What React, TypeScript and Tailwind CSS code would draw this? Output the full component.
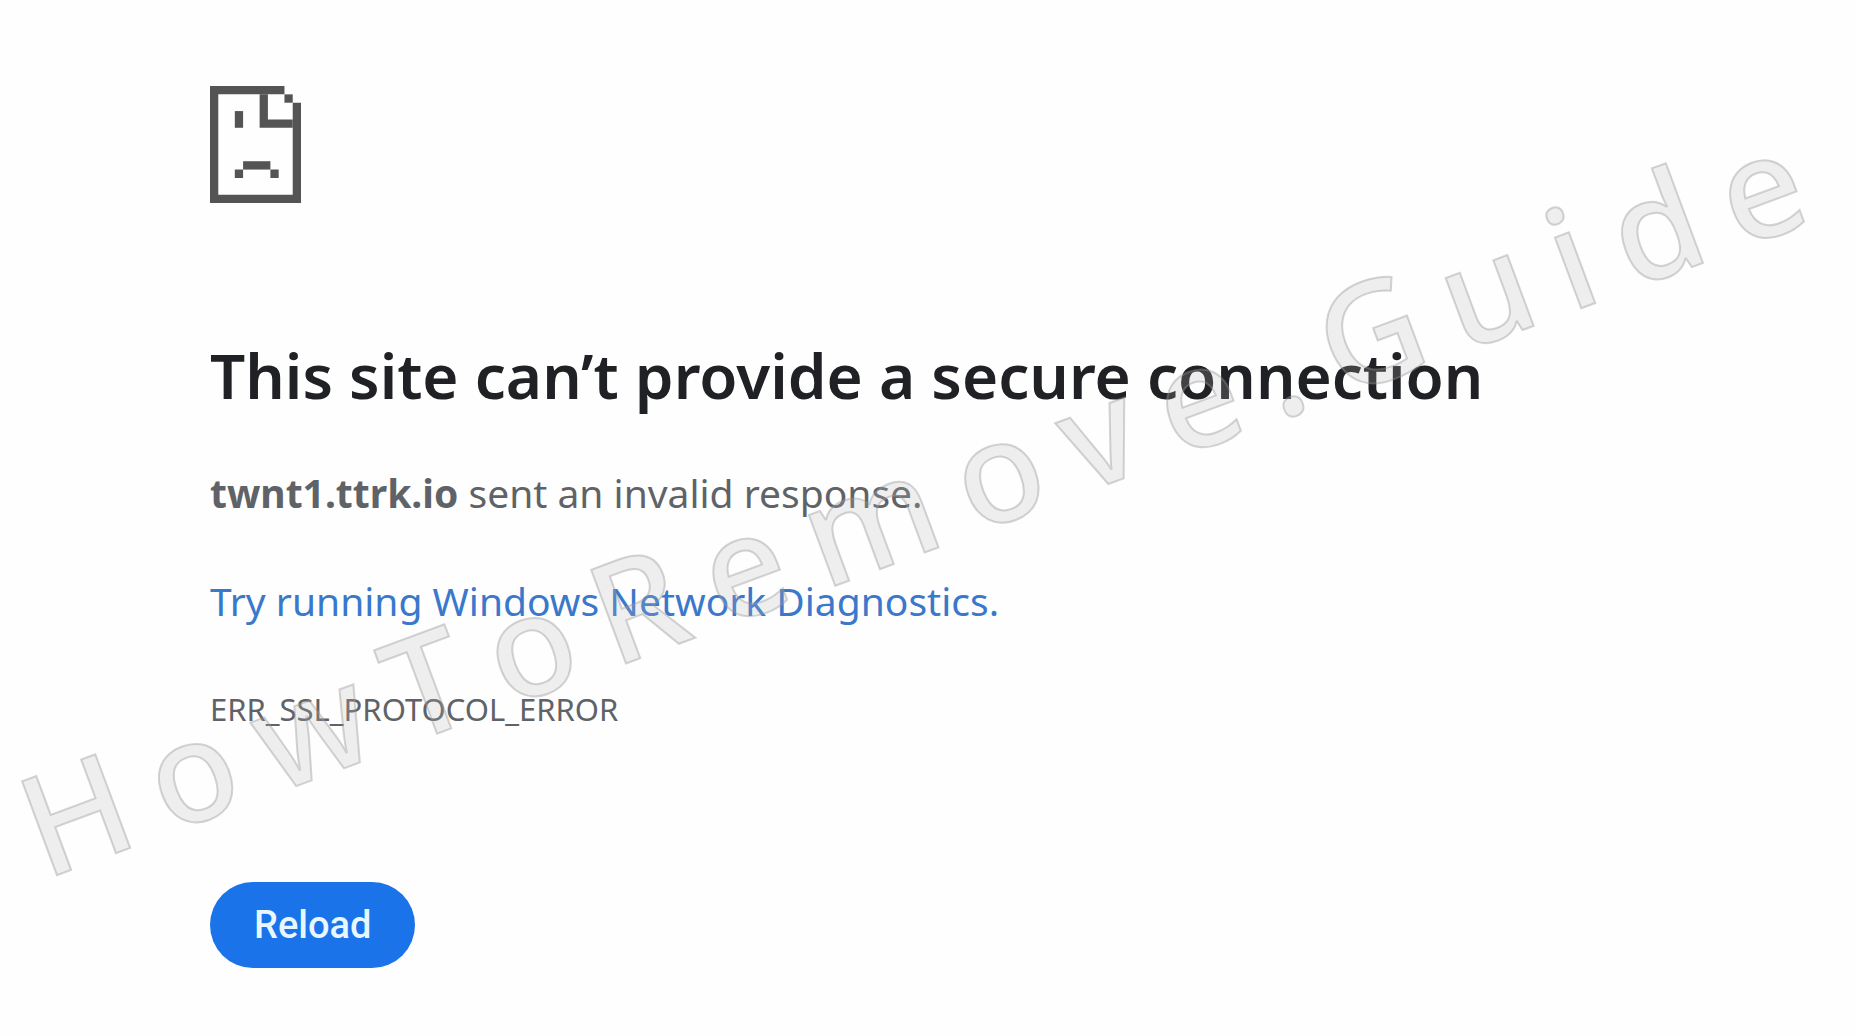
import React from 'react';

function SadPageIcon() {
  return (
    <svg
      viewBox="0 0 11 14"
      preserveAspectRatio="none"
      className="w-[91px] h-[117px] fill-[#545454]"
      aria-hidden="true"
    >
      {/* page outline */}
      <path d="M0 0H9V1H1V13H10V2H11V14H0Z" />
      {/* folded corner */}
      <path d="M6 1H7V4H10V5H6Z" />
      <path d="M9 1H10V2H9Z" />
      {/* face */}
      <path d="M3 3H4V5H3Z" />
      <path d="M4 9H7.3V10H4Z" />
      <path d="M3 10H4V11H3ZM7.3 10H8.3V11H7.3Z" />
    </svg>
  );
}

function Watermark() {
  return (
    <div
      aria-hidden="true"
      className="absolute left-[43px] top-[776px] origin-bottom-left -rotate-[20.4deg] whitespace-nowrap text-[140px] leading-[100px] font-medium tracking-[28px] [font-kerning:none] text-[#b4b4b4]/22 [-webkit-text-stroke:2px_rgba(150,150,150,0.4)] pointer-events-none select-none"
    >
      HowToRemove.Guide
    </div>
  );
}

export default function App() {
  return (
    <div className="relative min-h-screen overflow-hidden bg-[#fefefe] font-['Noto_Sans','Open_Sans',sans-serif]">
      <main className="flex flex-col items-start pl-[210px] pt-[86px] text-[#5f6368]">
        <SadPageIcon />
        <h1 className="mt-[132px] text-[62px] leading-[80px] font-semibold text-[#202124]">
          This site can’t provide a secure connection
        </h1>
        <p className="mt-[48px] text-[39px] leading-[60px]">
          <strong className="font-bold">twnt1.ttrk.io</strong> sent an invalid response.
        </p>
        <p className="mt-[48px] text-[39px] leading-[60px]">
          <a href="#diagnostics" className="text-[#3a78cc]">
            Try running Windows Network Diagnostics.
          </a>
        </p>
        <p className="mt-[48px] text-[31px] leading-[60px]">ERR_SSL_PROTOCOL_ERROR</p>
        <button
          type="button"
          onClick={() => window.location.reload()}
          className="mt-[143px] h-[86px] rounded-full bg-[#1a73e8] px-[44px] font-['Roboto',sans-serif] text-[38px] font-medium text-[#e8f6ff]"
        >
          Reload
        </button>
      </main>
      <Watermark />
    </div>
  );
}
